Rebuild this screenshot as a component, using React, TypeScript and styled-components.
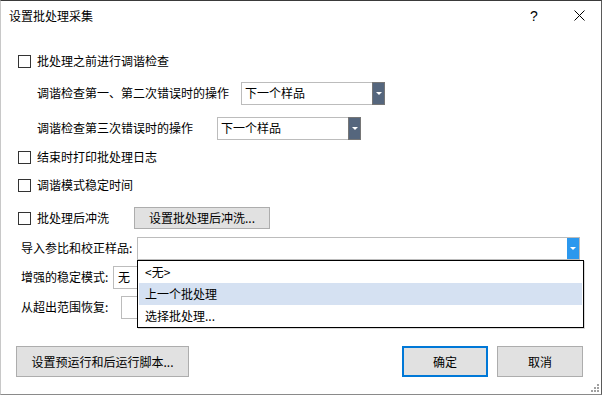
import React from 'react';
import styled, { createGlobalStyle } from 'styled-components';

const GlobalStyle = createGlobalStyle`
  html, body {
    margin: 0;
    padding: 0;
    background: #ffffff;
  }
  body {
    font-family: 'Noto Sans CJK SC', 'Microsoft YaHei', sans-serif;
    font-size: 12px;
    color: #000000;
  }
`;

const Window = styled.div`
  position: relative;
  box-sizing: border-box;
  width: 602px;
  height: 395px;
  background: #ffffff;
  border-top: 1px solid #3a3a3a;
  border-right: 1px solid #5a5a5a;
  border-bottom: 1px solid #8a8a8a;
  border-left: 1px solid #c8c8c8;
  display: flex;
  flex-direction: column;
`;

const TitleBar = styled.div`
  height: 29px;
  display: flex;
  align-items: center;
  padding-left: 8px;
`;

const Title = styled.div`
  flex: 1;
  font-size: 12px;
  line-height: 14px;
`;

const TitleButton = styled.div<{ $w: number }>`
  width: ${p => p.$w}px;
  height: 29px;
  display: flex;
  align-items: center;
  justify-content: center;
  font-family: 'Liberation Sans', sans-serif;
  font-size: 14px;
`;

const Body = styled.div`
  display: flex;
  flex-direction: column;
`;

const Row = styled.div<{ $top: number; $indent: number }>`
  height: 24px;
  margin-top: ${p => p.$top}px;
  padding-left: ${p => p.$indent}px;
  display: flex;
  align-items: center;
  line-height: 14px;
`;

const Box = styled.span`
  box-sizing: border-box;
  width: 13px;
  height: 13px;
  border: 1px solid #333333;
  background: #ffffff;
  margin-right: 6px;
`;

const Label = styled.span<{ $w?: number }>`
  ${p => (p.$w ? `width: ${p.$w}px; flex: none;` : '')}
  white-space: nowrap;
`;

const Select = styled.div<{ $w: number }>`
  box-sizing: border-box;
  width: ${p => p.$w}px;
  height: 23px;
  border: 1px solid #bcbcbc;
  display: flex;
  align-items: stretch;
  background: #ffffff;
`;

const SelectText = styled.span`
  flex: 1;
  display: flex;
  align-items: center;
  padding-left: 3px;
`;

const Arrow = styled.span<{ $blue?: boolean }>`
  width: ${p => (p.$blue ? 12 : 13)}px;
  margin: ${p => (p.$blue ? '0' : '-1px -1px -1px 0')};
  box-sizing: border-box;
  border: ${p => (p.$blue ? 'none' : '1px solid #767676')};
  background: ${p => (p.$blue ? '#2b98ee' : '#55667d')};
  display: flex;
  align-items: center;
  justify-content: center;
  &::after {
    content: '';
    width: 0;
    height: 0;
    border-left: 3px solid transparent;
    border-right: 3px solid transparent;
    border-top: 3px solid #ffffff;
  }
`;

const Button = styled.button<{ $w: number; $h: number; $primary?: boolean }>`
  box-sizing: border-box;
  width: ${p => p.$w}px;
  height: ${p => p.$h}px;
  background: #e1e1e1;
  border: ${p => (p.$primary ? '2px solid #0078d7' : '1px solid #adadad')};
  font-family: inherit;
  font-size: 12px;
  color: #000000;
  padding: 0;
  display: flex;
  align-items: center;
  justify-content: center;
  line-height: 14px;
`;

const ComboWrap = styled.div`
  position: relative;
  z-index: 2;
`;

const List = styled.div`
  position: absolute;
  left: 0;
  top: 23px;
  width: 447px;
  box-sizing: border-box;
  border: 1px solid #000000;
  background: #ffffff;
  padding: 0 1px;
  box-shadow: 1px 1px 0 rgba(0, 0, 0, 0.15);
`;

const ListItem = styled.div<{ $active?: boolean }>`
  height: 22px;
  display: flex;
  align-items: center;
  padding-left: 6px;
  background: ${p => (p.$active ? '#d5e1f2' : 'transparent')};
  line-height: 14px;
`;

const SmallInput = styled.div`
  box-sizing: border-box;
  width: 80px;
  height: 23px;
  border: 1px solid #bcbcbc;
  display: flex;
  align-items: center;
  padding-left: 4px;
  background: #ffffff;
`;

const Footer = styled.div`
  margin-top: 27px;
  padding: 0 18px 0 15px;
  display: flex;
  justify-content: space-between;
`;

const ButtonGroup = styled.div`
  display: flex;
  gap: 9px;
`;

const Grip = styled.svg`
  position: absolute;
  right: 1px;
  bottom: 1px;
`;

const Check: React.FC<{ label: string; top: number }> = ({ label, top }) => (
  <Row $top={top} $indent={17}>
    <Box />
    <Label>{label}</Label>
  </Row>
);

const App: React.FC = () => {
  return (
    <>
      <GlobalStyle />
      <Window>
        <TitleBar>
          <Title>设置批处理采集</Title>
          <TitleButton $w={46}>?</TitleButton>
          <TitleButton $w={44}>
            <svg width='11' height='11' viewBox='0 0 11 11'>
              <path d='M0.5 0.5 L10.5 10.5 M10.5 0.5 L0.5 10.5' stroke='#000' strokeWidth='1' />
            </svg>
          </TitleButton>
        </TitleBar>
        <Body>
          <Check top={19} label='批处理之前进行调谐检查' />
          <Row $top={8} $indent={36}>
            <Label $w={204}>调谐检查第一、第二次错误时的操作</Label>
            <Select $w={144}>
              <SelectText>下一个样品</SelectText>
              <Arrow />
            </Select>
          </Row>
          <Row $top={11} $indent={36}>
            <Label $w={180}>调谐检查第三次错误时的操作</Label>
            <Select $w={144}>
              <SelectText>下一个样品</SelectText>
              <Arrow />
            </Select>
          </Row>
          <Check top={5} label='结束时打印批处理日志' />
          <Check top={4} label='调谐模式稳定时间' />
          <Row $top={9} $indent={17}>
            <Box />
            <Label $w={97}>批处理后冲洗</Label>
            <Button $w={136} $h={22}>设置批处理后冲洗...</Button>
          </Row>
          <Row $top={6} $indent={20}>
            <Label $w={116}>导入参比和校正样品:</Label>
            <ComboWrap>
              <Select $w={443}>
                <SelectText />
                <Arrow $blue />
              </Select>
              <List>
                <ListItem>&lt;无&gt;</ListItem>
                <ListItem $active>上一个批处理</ListItem>
                <ListItem>选择批处理...</ListItem>
              </List>
            </ComboWrap>
          </Row>
          <Row $top={5} $indent={20}>
            <Label $w={92}>增强的稳定模式:</Label>
            <SmallInput>无</SmallInput>
          </Row>
          <Row $top={6} $indent={20}>
            <Label $w={100}>从超出范围恢复:</Label>
            <SmallInput />
          </Row>
          <Footer>
            <Button $w={173} $h={31}>设置预运行和后运行脚本...</Button>
            <ButtonGroup>
              <Button $w={86} $h={31} $primary>确定</Button>
              <Button $w={86} $h={31}>取消</Button>
            </ButtonGroup>
          </Footer>
        </Body>
        <Grip width='10' height='10' viewBox='0 0 10 10'>
          <g fill='#a0a0a0'>
            <rect x='7' y='1' width='2' height='2' />
            <rect x='4' y='4' width='2' height='2' />
            <rect x='7' y='4' width='2' height='2' />
            <rect x='1' y='7' width='2' height='2' />
            <rect x='4' y='7' width='2' height='2' />
            <rect x='7' y='7' width='2' height='2' />
          </g>
        </Grip>
      </Window>
    </>
  );
};

export default App;
